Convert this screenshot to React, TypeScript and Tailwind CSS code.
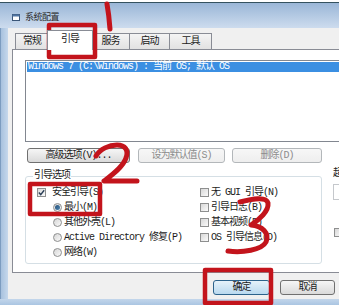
import React from "react";

function Tab({ label, cls, selected }: { label: string; cls: string; selected?: boolean }) {
  if (selected) {
    return (
      <div
        className={
          "relative z-10 -mb-px h-[20px] border border-b-0 border-[#898c95] bg-white flex items-center justify-center pb-[2px] " +
          cls
        }
      >
        {label}
      </div>
    );
  }
  return (
    <div
      className={
        "h-[16px] border border-b-0 border-[#898c95] bg-gradient-to-b from-[#f4f4f4] to-[#e2e2e2] flex items-center justify-center " +
        cls
      }
    >
      {label}
    </div>
  );
}

function Btn({ label, cls, disabled, def }: { label: string; cls: string; disabled?: boolean; def?: boolean }) {
  const base = "h-[15px] rounded-[3px] border flex items-center justify-center shrink-0 ";
  const look = def
    ? "border-[#2c628b] bg-gradient-to-b from-[#e6f2fa] to-[#b9d9ef] text-[#1b1b1b] "
    : disabled
    ? "border-[#b3b7ba] bg-gradient-to-b from-[#f7f7f7] to-[#eeeeee] text-[#8c8c8c] "
    : "border-[#707070] bg-gradient-to-b from-[#f6f6f6] to-[#dadada] text-[#1b1b1b] ";
  return <div className={base + look + cls}>{label}</div>;
}

function Check({ checked }: { checked?: boolean }) {
  return (
    <div className="w-[9px] h-[9px] shrink-0 border border-[#8e8f8f] bg-gradient-to-br from-[#d8d8d8] to-[#fbfbfb] flex items-center justify-center">
      {checked ? (
        <svg width="7" height="7" viewBox="0 0 7 7">
          <path d="M0.8 3.6 L2.7 5.6 L6.2 1.2" fill="none" stroke="#2b3f57" strokeWidth="1.4" />
        </svg>
      ) : null}
    </div>
  );
}

function Radio({ checked }: { checked?: boolean }) {
  return (
    <div className="w-[9px] h-[9px] shrink-0 rounded-full border border-[#8e8f8f] bg-gradient-to-br from-[#d6d6d6] to-[#fafafa] flex items-center justify-center">
      {checked ? <div className="w-[5px] h-[5px] rounded-full bg-gradient-to-br from-[#25507a] to-[#4f86b0]" /> : null}
    </div>
  );
}

export default function App() {
  return (
    <div className="w-[339px] h-[305px] overflow-hidden relative bg-white font-['Liberation_Mono','Noto_Sans_CJK_SC',monospace] text-[10px] leading-[12px] tracking-[-1px] text-[#1b1b1b]">
      <div className="mt-[2px] w-[420px] h-[303px] flex flex-col border-t border-[#34525f]">
        {/* title bar */}
        <div className="h-[25px] shrink-0 flex items-center pl-[12px] pt-[3px] bg-gradient-to-b from-[#9ab6d7] to-[#cddcee]">
          <svg width="8" height="7" viewBox="0 0 8 7">
            <rect x="0.5" y="0.5" width="7" height="6" fill="#ffffff" stroke="#3b5678" />
            <rect x="0.5" y="0.5" width="7" height="2" fill="#4f74a2" />
          </svg>
          <span className="ml-[5px] text-[9px] text-[#2b2b2b] font-['Noto_Sans_CJK_SC',sans-serif] tracking-[-0.5px]">
            系统配置
          </span>
        </div>

        <div className="flex flex-1 min-h-0">
          {/* left frame */}
          <div className="w-[8px] shrink-0 border-l border-[#7c9cc0] bg-gradient-to-r from-[#a7c1de] to-[#c6d8ec]" />

          {/* client */}
          <div className="flex-1 bg-[#f0f0f0] flex flex-col">
            {/* tabs */}
            <div className="h-[21px] shrink-0 flex items-end pl-[7px]">
              <Tab label="常规" cls="w-[34px]" />
              <Tab label="引导" cls="w-[46px] -ml-[2px] -mr-[2px]" selected />
              <Tab label="服务" cls="w-[39px]" />
              <Tab label="启动" cls="w-[41px] -ml-px" />
              <Tab label="工具" cls="w-[43px] -ml-px" />
            </div>

            {/* panel */}
            <div className="ml-[4px] h-[224px] shrink-0 bg-white border border-r-0 border-[#898c95] flex flex-col pl-[12px] pt-[10px]">
              {/* listbox */}
              <div className="h-[82px] shrink-0 border border-r-0 border-[#828790] bg-white pt-[1px] pl-[1px]">
                <div className="h-[10px] leading-[10px] bg-[#3b8fe2] text-white pl-[1px] whitespace-pre">
                  Windows 7 (C:\Windows) : 当前 OS; 默认 OS
                </div>
              </div>

              {/* buttons */}
              <div className="mt-[6px] flex">
                <Btn label="高级选项(V)..." cls="ml-[2px] w-[103px]" />
                <Btn label="设为默认值(S)" cls="ml-[8px] w-[87px]" disabled />
                <Btn label="删除(D)" cls="ml-[7px] w-[90px]" disabled />
              </div>

              {/* group row */}
              <div className="mt-[7px] flex items-start">
                <fieldset className="w-[297px] shrink-0 border border-[#d5dfe5] rounded-[3px] pl-[7px] pr-[4px] pt-[3px] pb-[3px]">
                  <legend className="px-[1px] h-[12px] leading-[12px]">引导选项</legend>
                  <div className="grid grid-cols-[167px_1fr]">
                    <div className="flex flex-col pl-[4px]">
                      <div className="h-[15px] flex items-center gap-[6px]">
                        <Check checked />
                        <span>安全引导(S)</span>
                      </div>
                      <div className="h-[15px] flex items-center gap-[2px] pl-[16px]">
                        <Radio checked />
                        <span>最小(M)</span>
                      </div>
                      <div className="h-[15px] flex items-center gap-[2px] pl-[16px]">
                        <Radio />
                        <span>其他外壳(L)</span>
                      </div>
                      <div className="h-[15px] flex items-center gap-[2px] pl-[16px] whitespace-pre">
                        <Radio />
                        <span>Active Directory 修复(P)</span>
                      </div>
                      <div className="h-[15px] flex items-center gap-[2px] pl-[16px]">
                        <Radio />
                        <span>网络(W)</span>
                      </div>
                    </div>
                    <div className="flex flex-col whitespace-pre">
                      <div className="h-[15px] flex items-center gap-[2px]">
                        <Check />
                        <span>无 GUI 引导(N)</span>
                      </div>
                      <div className="h-[15px] flex items-center gap-[2px]">
                        <Check />
                        <span>引导日志(B)</span>
                      </div>
                      <div className="h-[15px] flex items-center gap-[2px]">
                        <Check />
                        <span>基本视频(E)</span>
                      </div>
                      <div className="h-[15px] flex items-center gap-[2px]">
                        <Check />
                        <span>OS 引导信息(O)</span>
                      </div>
                    </div>
                  </div>
                </fieldset>

                {/* right column (cut off) */}
                <div className="ml-[11px] flex flex-col">
                  <span className="h-[12px] leading-[12px] -mt-[2px]">超时(T):</span>
                  <div className="mt-[4px] w-[30px] h-[16px] border border-[#c5c8cc] bg-white" />
                  <div className="mt-[28px] ml-[1px]">
                    <Check />
                  </div>
                </div>
              </div>
            </div>

            {/* bottom buttons */}
            <div className="mt-[7px] flex pl-[205px]">
              <Btn label="确定" cls="w-[57px]" def />
              <Btn label="取消" cls="ml-[10px] w-[55px]" />
            </div>
          </div>
        </div>

        {/* bottom frame */}
        <div className="h-[6px] shrink-0 bg-gradient-to-b from-[#c3d6eb] to-[#aac5e2]" />
      </div>

      {/* red annotations */}
      <svg className="absolute inset-0 pointer-events-none" width="339" height="305" viewBox="0 0 339 305">
        <g fill="none" stroke="#c3141c" strokeLinecap="round" strokeLinejoin="round">
          <path d="M107 4 Q109 15 110 29" strokeWidth="5" />
          <rect x="49" y="25" width="46" height="32" strokeWidth="4.5" strokeLinecap="butt" />
          <path
            d="M96 156 C100 149 109 145 117 145 C125 145 129 150 126 158 C123 167 112 175 104 181 L137 181"
            strokeWidth="5"
          />
          <rect x="30" y="184" width="70" height="30" strokeWidth="4.5" strokeLinecap="butt" />
          <path
            d="M240 202 C252 199 266 196 268 203 C269 211 259 220 251 225 C262 226 270 233 266 242 C262 250 242 253 228 251"
            strokeWidth="5"
          />
          <rect x="205" y="270" width="66" height="33" strokeWidth="4.5" strokeLinecap="butt" />
        </g>
      </svg>
    </div>
  );
}
